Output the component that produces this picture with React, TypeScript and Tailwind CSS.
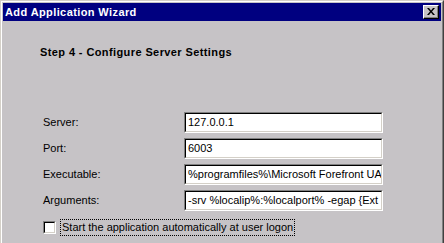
const fields = [
  { label: "Server:", value: "127.0.0.1" },
  { label: "Port:", value: "6003" },
  { label: "Executable:", value: "%programfiles%\\Microsoft Forefront UAG" },
  { label: "Arguments:", value: "-srv %localip%:%localport% -egap {Ext" },
];

const SunkenField = ({ value }: { value: string }) => {
  return (
    <div className="h-[21px] w-[199px] border border-t-[#808080] border-l-[#808080] border-b-white border-r-white">
      <div className="h-full w-full border border-t-black border-l-black border-b-[#d4d0c8] border-r-[#d4d0c8] bg-white overflow-hidden">
        <div className="pl-[2px] leading-[17px] whitespace-nowrap text-black">{value}</div>
      </div>
    </div>
  );
};

const App = () => {
  return (
    <div className="w-[444px] h-[243px] overflow-hidden bg-[#c6c3c6] font-['Liberation_Sans',Arial,sans-serif] text-[11px] text-black">
      <div className="h-[260px] w-[444px] border-t border-l border-r border-t-[#d4d0c8] border-l-[#d4d0c8] border-r-[#404040]">
        <div className="h-full border-t border-l border-r border-t-white border-l-white border-r-[#808080] p-[1px]">
          {/* title bar */}
          <div className="h-[18px] bg-[#000080] flex items-center justify-between pl-[2px] pr-[2px]">
            <span className="text-white font-bold text-[11px] leading-none tracking-[0.4px]">Add Application Wizard</span>
            <div className="w-[16px] h-[14px] bg-[#c6c3c6] border border-t-white border-l-white border-b-black border-r-black">
              <div className="w-full h-full border-b border-r border-b-[#808080] border-r-[#808080] flex items-center justify-center">
                <svg width="8" height="7" viewBox="0 0 8 7">
                  <path d="M0 0h2l2 2.5L6 0h2L5 3.5 8 7H6L4 4.5 2 7H0l3-3.5z" fill="black" />
                </svg>
              </div>
            </div>
          </div>

          {/* body */}
          <div className="pl-[37px] pt-[25px]">
            <div className="font-bold leading-[13px] tracking-[0.4px]">Step 4 - Configure Server Settings</div>
          </div>

          <div className="pl-[40px] pt-[53px] grid grid-cols-[141px_199px] gap-y-[5px] items-center">
            {fields.map((f) => (
              <div key={f.label} className="contents">
                <div className="leading-[13px]">{f.label}</div>
                <SunkenField value={f.value} />
              </div>
            ))}
          </div>

          <div className="pl-[40px] pt-[8px] flex items-center">
            <div className="w-[13px] h-[13px] border border-t-[#808080] border-l-[#808080] border-b-white border-r-white">
              <div className="w-full h-full bg-white border border-t-black border-l-black border-b-[#d4d0c8] border-r-[#d4d0c8]" />
            </div>
            <div className="ml-[4px] h-[17px] px-[1px] border border-dotted border-black flex items-center leading-none">
              Start the application automatically at user logon
            </div>
          </div>
        </div>
      </div>
    </div>
  );
};

export default App;
